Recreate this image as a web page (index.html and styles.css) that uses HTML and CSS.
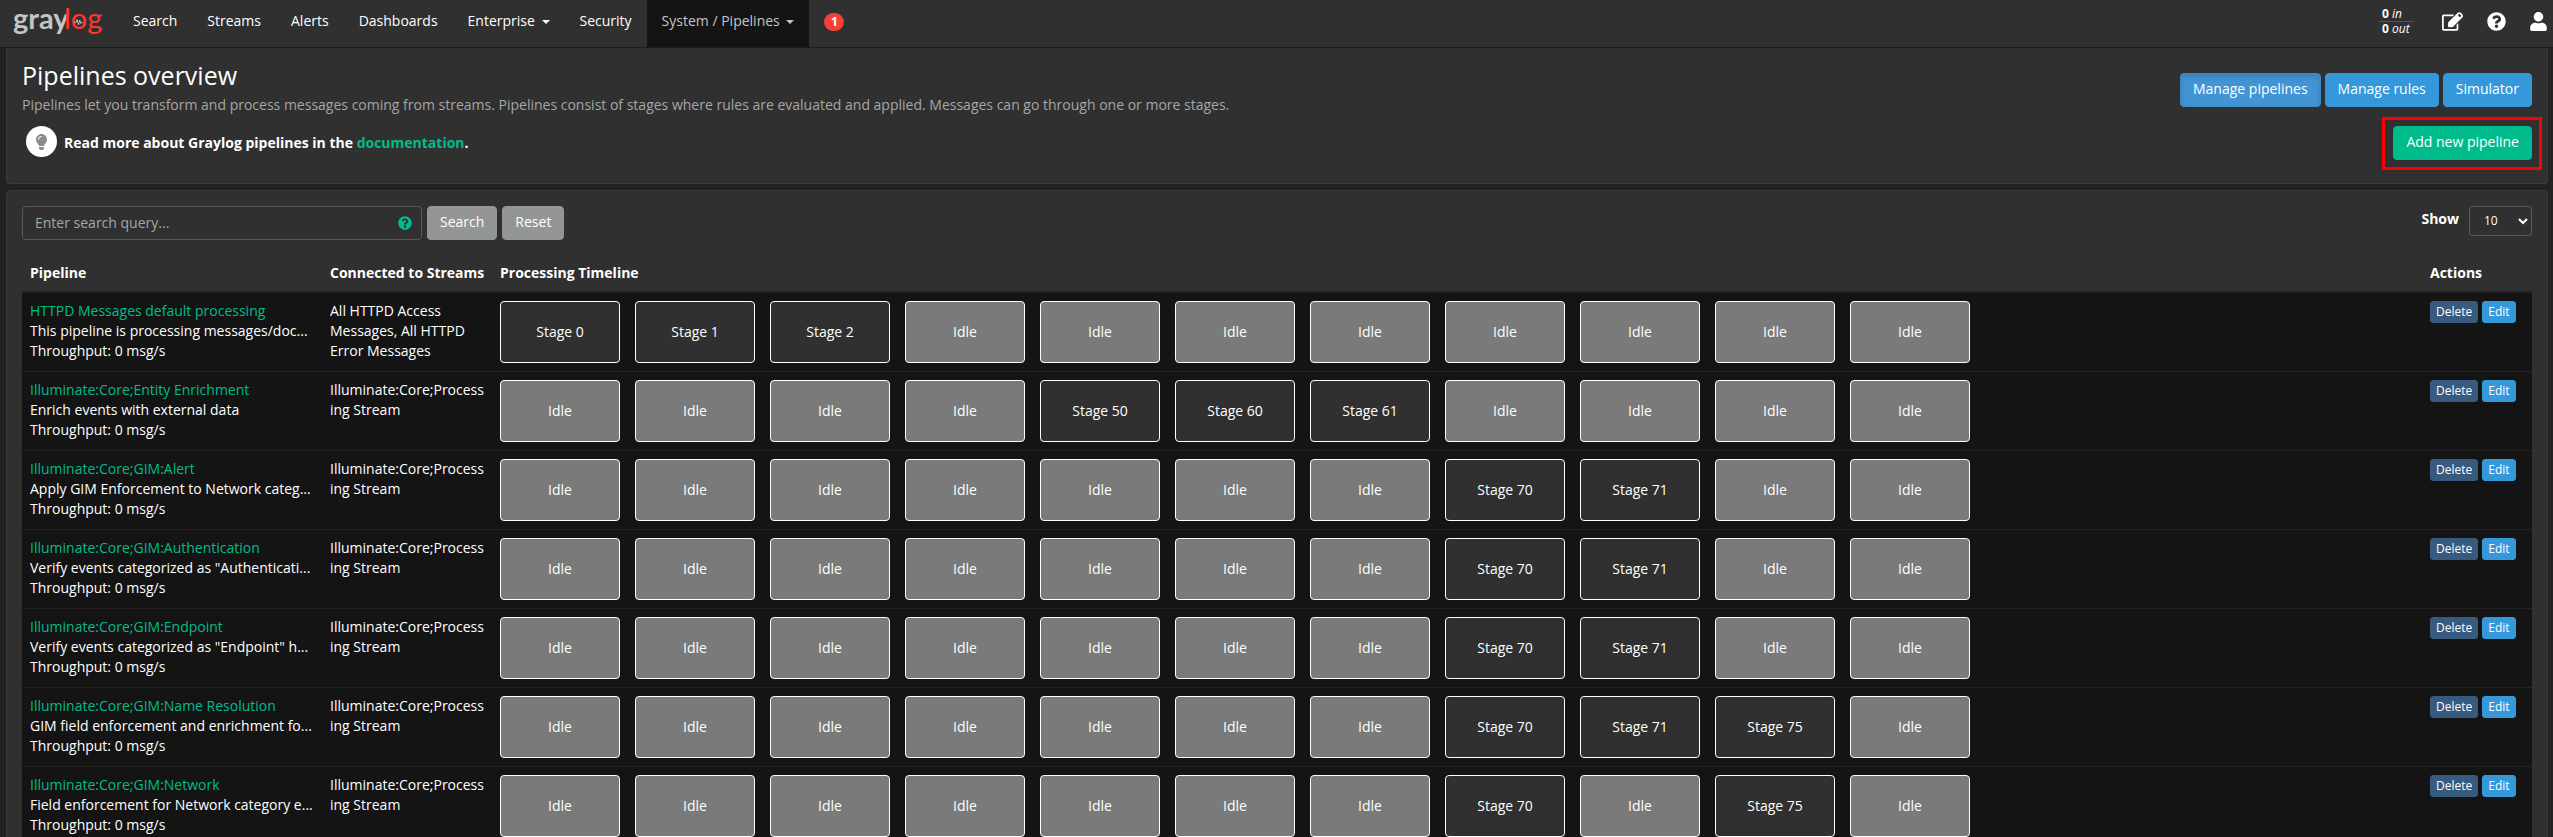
FILE: index.html
```html
<!DOCTYPE html>
<html lang="en">
<head>
<meta charset="utf-8">
<title>Pipelines overview</title>
<link rel="stylesheet" href="styles.css">
</head>
<body>
<nav class="navbar">
  <a class="brand" href="#" aria-label="graylog">
    <svg class="brand-logo" viewBox="0 0 92 40" width="92" height="40">
      <text class="brand-gray" x="0" y="29">gray</text>
      <text class="brand-log" x="51" y="29">log</text>
      <path d="M61.500 22.500h1.500l1.200-3 1.300 5.500 1.200-5 1.300 3.500.700-1h1" fill="none" stroke="#c4c4c4" stroke-width="1"/>
    </svg>
  </a>
  <a class="nav-item" href="#">Search</a>
  <a class="nav-item" href="#">Streams</a>
  <a class="nav-item" href="#">Alerts</a>
  <a class="nav-item" href="#">Dashboards</a>
  <a class="nav-item" href="#">Enterprise <span class="caret"></span></a>
  <a class="nav-item" href="#">Security</a>
  <a class="nav-item active" href="#">System / Pipelines <span class="caret"></span></a>
  <a class="notification" href="#">1</a>
  <div class="nav-right">
    <div class="throughput"><span class="rate"><b>0</b> <i>in</i></span><span class="rate"><b>0</b> <i>out</i></span></div>
    <a class="nav-icon" href="#" aria-label="Scratchpad"><svg viewBox="0 0 576 512" width="21" height="19"><path fill="currentColor" d="M402.300 344.900l32-32c5-5 13.700-1.500 13.700 5.700V464c0 26.500-21.500 48-48 48H48c-26.500 0-48-21.500-48-48V112c0-26.500 21.500-48 48-48h273.500c7.100 0 10.700 8.600 5.700 13.700l-32 32c-1.500 1.500-3.500 2.300-5.700 2.300H48v352h352V350.500c0-2.100.8-4.100 2.300-5.600zm156.600-201.800L296.300 405.700l-90.400 10c-26.200 2.900-48.500-19.200-45.600-45.600l10-90.400L432.900 17.100c22.900-22.900 59.900-22.900 82.700 0l43.200 43.200c22.900 22.900 22.900 60 .1 82.800zM524.900 94.300l-43.200-43.200c-4.100-4.100-10.800-4.100-14.800 0L436 82l58.100 58.100 30.900-30.900c4-4.200 4-10.800-.1-14.900z"/></svg></a>
    <a class="nav-icon" href="#" aria-label="Help"><svg viewBox="0 0 512 512" width="19" height="19"><path fill="currentColor" d="M504 256c0 137-111 248-248 248S8 393 8 256 119 8 256 8s248 111 248 248zM262.700 90c-54.500 0-89.300 23-116.500 63.800-3.500 5.300-2.400 12.400 2.700 16.300l34.700 26.300c5.200 3.900 12.600 3 16.700-2.100 17.900-22.700 30.100-35.800 57.300-35.800 20.400 0 45.700 13.100 45.700 33 0 15-12.400 22.700-32.500 34C247.100 238.500 216 254.900 216 296v4c0 6.600 5.400 12 12 12h56c6.600 0 12-5.400 12-12v-1.300c0-28.500 83.200-29.600 83.200-106.700 0-58-60.200-102-116.500-102zM256 338c-25.400 0-46 20.600-46 46s20.600 46 46 46 46-20.600 46-46-20.600-46-46-46z"/></svg></a>
    <a class="nav-icon" href="#" aria-label="User"><svg viewBox="0 0 448 512" width="17" height="19"><path fill="currentColor" d="M224 256c70.700 0 128-57.300 128-128S294.700 0 224 0 96 57.300 96 128s57.300 128 128 128zm89.600 32h-16.700c-22.200 10.200-46.900 16-72.900 16s-50.600-5.800-72.900-16h-16.700C60.200 288 0 348.200 0 422.400V464c0 26.500 21.500 48 48 48h352c26.500 0 48-21.500 48-48v-41.600c0-74.200-60.200-134.400-134.400-134.400z"/></svg></a>
  </div>
</nav>
<main class="page">
  <section class="panel header-panel">
    <div class="intro">
      <h1 class="title">Pipelines overview</h1>
      <p class="description">Pipelines let you transform and process messages coming from streams. Pipelines consist of stages where rules are evaluated and applied. Messages can go through one or more stages.</p>
      <p class="support">
        <span class="bulb"><svg viewBox="0 0 352 512" width="11" height="16"><path fill="currentColor" d="M96.100 454.400c0 6.300 1.900 12.500 5.400 17.700l17.100 25.700a32 32 0 0 0 26.600 14.300h61.700a32 32 0 0 0 26.600-14.300l17.100-25.700a32 32 0 0 0 5.400-17.700V416H96zM0 176c0 44.400 16.500 84.900 43.600 115.800 16.500 18.900 42.400 58.200 52.200 91.400v.8h160.200v-.8c9.900-33.200 35.700-72.600 52.200-91.500C335.500 260.900 352 220.400 352 176 352 78.600 272.900-.3 175.500 0 73.400.3 0 83 0 176zm176-80c-44.100 0-80 35.900-80 80 0 8.800-7.200 16-16 16s-16-7.200-16-16c0-61.800 50.200-112 112-112 8.800 0 16 7.200 16 16s-7.200 16-16 16z"/></svg></span>
        <strong class="support-text">Read more about Graylog pipelines in the <a class="link" href="#">documentation</a>.</strong>
      </p>
    </div>
    <div class="header-actions">
      <div class="button-row">
        <button class="btn btn-info pressed" type="button">Manage pipelines</button>
        <button class="btn btn-info" type="button">Manage rules</button>
        <button class="btn btn-info" type="button">Simulator</button>
      </div>
      <div class="highlight"><button class="btn btn-success" type="button">Add new pipeline</button></div>
    </div>
  </section>
  <section class="panel list-panel">
    <div class="toolbar">
      <form class="search-form">
        <div class="search-box">
          <input class="search-input" type="text" aria-label="Search query" placeholder="Enter search query...">
          <svg class="search-help" viewBox="0 0 512 512" width="14" height="14"><path fill="currentColor" d="M504 256c0 137-111 248-248 248S8 393 8 256 119 8 256 8s248 111 248 248zM262.700 90c-54.500 0-89.300 23-116.500 63.800-3.500 5.300-2.400 12.400 2.700 16.300l34.700 26.300c5.200 3.900 12.600 3 16.700-2.100 17.900-22.700 30.100-35.800 57.300-35.800 20.400 0 45.700 13.100 45.700 33 0 15-12.400 22.700-32.500 34C247.100 238.500 216 254.900 216 296v4c0 6.600 5.400 12 12 12h56c6.600 0 12-5.400 12-12v-1.300c0-28.500 83.200-29.600 83.200-106.700 0-58-60.200-102-116.500-102zM256 338c-25.400 0-46 20.600-46 46s20.600 46 46 46 46-20.600 46-46-20.600-46-46-46z"/></svg>
        </div>
        <button class="btn btn-default" type="button">Search</button>
        <button class="btn btn-default" type="button">Reset</button>
      </form>
      <div class="page-size">
        <label class="page-size-label" for="page-size">Show</label>
        <div class="select-box">
          <select class="page-size-select" id="page-size"><option>10</option><option>50</option><option>100</option></select>
          <svg class="select-arrow" viewBox="0 0 10 7" width="10" height="7"><path d="M1 1l4 4 4-4" fill="none" stroke="#fff" stroke-width="2"/></svg>
        </div>
      </div>
    </div>
    <table class="pipelines">
      <colgroup><col class="col-name"><col class="col-streams"><col><col class="col-actions"></colgroup>
      <thead><tr><th>Pipeline</th><th>Connected to Streams</th><th>Processing Timeline</th><th>Actions</th></tr></thead>
      <tbody>
        <tr>
          <td><a class="name" href="#">HTTPD Messages default processing</a><div class="about">This pipeline is processing messages/doc...</div><div>Throughput: 0 msg/s</div></td>
          <td class="streams">All HTTPD Access Messages, All HTTPD Error Messages</td>
          <td><div class="timeline"><span class="stage used">Stage 0</span><span class="stage used">Stage 1</span><span class="stage used">Stage 2</span><span class="stage">Idle</span><span class="stage">Idle</span><span class="stage">Idle</span><span class="stage">Idle</span><span class="stage">Idle</span><span class="stage">Idle</span><span class="stage">Idle</span><span class="stage">Idle</span></div></td>
          <td><div class="button-row"><button class="btn btn-xs btn-primary" type="button">Delete</button><button class="btn btn-xs btn-info" type="button">Edit</button></div></td>
        </tr>
        <tr>
          <td><a class="name" href="#">Illuminate:Core;Entity Enrichment</a><div class="about">Enrich events with external data</div><div>Throughput: 0 msg/s</div></td>
          <td class="streams">Illuminate:Core;Processing Stream</td>
          <td><div class="timeline"><span class="stage">Idle</span><span class="stage">Idle</span><span class="stage">Idle</span><span class="stage">Idle</span><span class="stage used">Stage 50</span><span class="stage used">Stage 60</span><span class="stage used">Stage 61</span><span class="stage">Idle</span><span class="stage">Idle</span><span class="stage">Idle</span><span class="stage">Idle</span></div></td>
          <td><div class="button-row"><button class="btn btn-xs btn-primary" type="button">Delete</button><button class="btn btn-xs btn-info" type="button">Edit</button></div></td>
        </tr>
        <tr>
          <td><a class="name" href="#">Illuminate:Core;GIM:Alert</a><div class="about">Apply GIM Enforcement to Network categ...</div><div>Throughput: 0 msg/s</div></td>
          <td class="streams">Illuminate:Core;Processing Stream</td>
          <td><div class="timeline"><span class="stage">Idle</span><span class="stage">Idle</span><span class="stage">Idle</span><span class="stage">Idle</span><span class="stage">Idle</span><span class="stage">Idle</span><span class="stage">Idle</span><span class="stage used">Stage 70</span><span class="stage used">Stage 71</span><span class="stage">Idle</span><span class="stage">Idle</span></div></td>
          <td><div class="button-row"><button class="btn btn-xs btn-primary" type="button">Delete</button><button class="btn btn-xs btn-info" type="button">Edit</button></div></td>
        </tr>
        <tr>
          <td><a class="name" href="#">Illuminate:Core;GIM:Authentication</a><div class="about">Verify events categorized as "Authenticati...</div><div>Throughput: 0 msg/s</div></td>
          <td class="streams">Illuminate:Core;Processing Stream</td>
          <td><div class="timeline"><span class="stage">Idle</span><span class="stage">Idle</span><span class="stage">Idle</span><span class="stage">Idle</span><span class="stage">Idle</span><span class="stage">Idle</span><span class="stage">Idle</span><span class="stage used">Stage 70</span><span class="stage used">Stage 71</span><span class="stage">Idle</span><span class="stage">Idle</span></div></td>
          <td><div class="button-row"><button class="btn btn-xs btn-primary" type="button">Delete</button><button class="btn btn-xs btn-info" type="button">Edit</button></div></td>
        </tr>
        <tr>
          <td><a class="name" href="#">Illuminate:Core;GIM:Endpoint</a><div class="about">Verify events categorized as "Endpoint" h...</div><div>Throughput: 0 msg/s</div></td>
          <td class="streams">Illuminate:Core;Processing Stream</td>
          <td><div class="timeline"><span class="stage">Idle</span><span class="stage">Idle</span><span class="stage">Idle</span><span class="stage">Idle</span><span class="stage">Idle</span><span class="stage">Idle</span><span class="stage">Idle</span><span class="stage used">Stage 70</span><span class="stage used">Stage 71</span><span class="stage">Idle</span><span class="stage">Idle</span></div></td>
          <td><div class="button-row"><button class="btn btn-xs btn-primary" type="button">Delete</button><button class="btn btn-xs btn-info" type="button">Edit</button></div></td>
        </tr>
        <tr>
          <td><a class="name" href="#">Illuminate:Core;GIM:Name Resolution</a><div class="about">GIM field enforcement and enrichment fo...</div><div>Throughput: 0 msg/s</div></td>
          <td class="streams">Illuminate:Core;Processing Stream</td>
          <td><div class="timeline"><span class="stage">Idle</span><span class="stage">Idle</span><span class="stage">Idle</span><span class="stage">Idle</span><span class="stage">Idle</span><span class="stage">Idle</span><span class="stage">Idle</span><span class="stage used">Stage 70</span><span class="stage used">Stage 71</span><span class="stage used">Stage 75</span><span class="stage">Idle</span></div></td>
          <td><div class="button-row"><button class="btn btn-xs btn-primary" type="button">Delete</button><button class="btn btn-xs btn-info" type="button">Edit</button></div></td>
        </tr>
        <tr>
          <td><a class="name" href="#">Illuminate:Core;GIM:Network</a><div class="about">Field enforcement for Network category e...</div><div>Throughput: 0 msg/s</div></td>
          <td class="streams">Illuminate:Core;Processing Stream</td>
          <td><div class="timeline"><span class="stage">Idle</span><span class="stage">Idle</span><span class="stage">Idle</span><span class="stage">Idle</span><span class="stage">Idle</span><span class="stage">Idle</span><span class="stage">Idle</span><span class="stage used">Stage 70</span><span class="stage">Idle</span><span class="stage used">Stage 75</span><span class="stage">Idle</span></div></td>
          <td><div class="button-row"><button class="btn btn-xs btn-primary" type="button">Delete</button><button class="btn btn-xs btn-info" type="button">Edit</button></div></td>
        </tr>
      </tbody>
    </table>
  </section>
</main>
</body>
</html>
```
FILE: styles.css
```css
* { box-sizing: border-box; }
body {
  margin: 0;
  background: #222;
  color: #fff;
  font: 14px/20px "Open Sans", "Noto Sans", sans-serif;
}
a { text-decoration: none; }
h1, p { margin: 0; }
button, input, select { font: inherit; color: inherit; margin: 0; }

.navbar {
  display: flex;
  height: 48px;
  padding: 0 6px 0 13px;
  background: #303030;
  border-bottom: 1px solid #1c1c1c;
}
.brand { width: 105px; }
.brand-logo { display: block; overflow: visible; }
.brand-gray, .brand-log { font-family: Lato, sans-serif; font-size: 29px; }
.brand-gray { fill: #c4c4c4; font-weight: 700; }
.brand-log { fill: #ff3633; font-weight: 400; }
.nav-item { padding: 11px 15px 0; color: #fff; white-space: nowrap; }
.nav-item.active { background: #141414; color: #c4c4c4; }
.caret {
  display: inline-block;
  margin-left: 3px;
  border: 4px solid transparent;
  border-top-color: currentColor;
  border-bottom: 0;
  vertical-align: middle;
}
.notification {
  align-self: flex-start;
  margin: 13px 0 0 15px;
  padding: 0 6px;
  min-width: 20px;
  border-radius: 9px;
  background: #f44336;
  color: #fff;
  font-size: 12px;
  line-height: 18px;
  font-weight: 700;
  text-align: center;
}
.nav-right { display: flex; align-items: flex-start; gap: 24px; margin-left: auto; }
.throughput { display: flex; flex-direction: column; width: 35px; margin: 7px 4px 0 0; font-size: 12px; line-height: 14px; }
.rate { padding-left: 3px; white-space: nowrap; }
.rate + .rate { border-top: 1px solid #555; }
.nav-icon { padding-top: 12px; color: #fff; }
.nav-icon svg { display: block; }

.page { display: flex; flex-direction: column; gap: 6px; padding: 0 5px 0 6px; }
.panel { background: #303030; border: 1px solid #3b3b3b; border-radius: 4px; padding: 15px; }
.header-panel {
  display: flex;
  justify-content: space-between;
  padding: 13px 15px;
  border-top: 0;
  border-radius: 0 0 4px 4px;
}
.title { font-size: 25px; line-height: 28px; font-weight: 400; }
.description { margin-top: 6px; color: #a6a6a6; }
.support { display: flex; align-items: center; gap: 7px; margin: 11px 0 0 4px; }
.support-text { padding-top: 3px; }
.bulb {
  display: flex;
  align-items: center;
  justify-content: center;
  width: 31px;
  height: 31px;
  border-radius: 50%;
  background: #fff;
  color: #8c8c8c;
}
.link, .name { color: #00bc8c; }
.header-actions { display: flex; flex-direction: column; align-items: flex-end; gap: 10px; padding-top: 12px; }
.button-row { display: flex; gap: 4px; }
.highlight { margin-right: -10px; padding: 6px 7px 7px 8px; border: 3px solid #f00; }

.btn { display: block; padding: 5px 12px 7px; border: 1px solid transparent; border-radius: 4px; color: #fff; }
.btn-info { background: #3498db; border-color: #3498db; }
.btn-info.pressed { background: #4394d5; border-color: #3b8ac8; box-shadow: inset 0 3px 5px rgba(0, 0, 0, .125); }
.btn-success { background: #00bc8c; border-color: #00bc8c; }
.btn-default { background: #949695; border-color: #949695; }
.btn-primary { background: #375a7f; border-color: #375a7f; }
.btn-xs { padding: 1px 5px; border-radius: 3px; font-size: 12px; line-height: 18px; }

.toolbar { display: flex; justify-content: space-between; }
.search-form { display: flex; gap: 5px; }
.search-box { position: relative; width: 400px; }
.search-input {
  width: 100%;
  height: 34px;
  padding: 5px 12px 7px;
  background: transparent;
  border: 1px solid #595959;
  border-radius: 4px;
}
.search-input::placeholder { color: #a6a6a6; opacity: 1; }
.search-help { position: absolute; right: 10px; top: 10px; color: #00bc8c; }
.page-size { display: flex; align-items: flex-start; gap: 10px; }
.page-size-label { padding-top: 3px; font-weight: 700; }
.select-box { position: relative; }
.page-size-select {
  display: block;
  appearance: none;
  width: 63px;
  height: 30px;
  padding: 0 14px;
  background: transparent;
  border: 1px solid #595959;
  border-radius: 3px;
  font-size: 12px;
}
.select-arrow { position: absolute; right: 4px; top: 12px; }

.pipelines { width: 100%; margin-top: 15px; table-layout: fixed; border-collapse: separate; border-spacing: 0; }
.col-name { width: 300px; }
.col-streams { width: 170px; }
.col-actions { width: 110px; }
.pipelines th { padding: 8px; border-bottom: 2px solid #222; text-align: left; font-weight: 700; white-space: nowrap; }
.pipelines td { padding: 8px; background: #141414; border-bottom: 1px solid #222; vertical-align: top; }
.about { white-space: nowrap; }
.streams { word-break: break-word; }
.timeline { display: flex; gap: 15px; }
.stage {
  width: 120px;
  height: 62px;
  border: 1px solid #fff;
  border-radius: 4px;
  background: #7a7a7a;
  text-align: center;
  line-height: 60px;
}
.stage.used { background: #303030; }
```
